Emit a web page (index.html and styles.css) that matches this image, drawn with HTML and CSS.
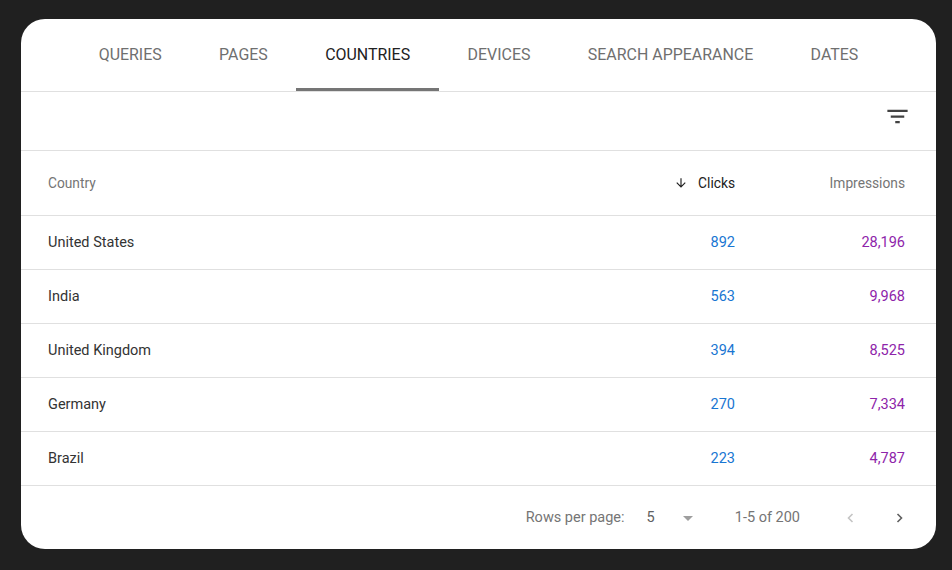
FILE: index.html
```html
<!DOCTYPE html>
<html>
<head>
<meta charset="utf-8">
<link rel="stylesheet" href="styles.css">
</head>
<body>
<div class="card">
  <nav class="tabs">
    <div class="tab">Queries</div>
    <div class="tab">Pages</div>
    <div class="tab active">Countries</div>
    <div class="tab">Devices</div>
    <div class="tab">Search appearance</div>
    <div class="tab">Dates</div>
  </nav>
  <div class="toolbar">
    <svg class="filter" viewBox="0 0 24 24" width="27" height="27"><path d="M10 18h4v-2h-4v2zM3 6v2h18V6H3zm3 7h12v-2H6v2z" fill="#424242"/></svg>
  </div>
  <div class="row head">
    <div class="c-name">Country</div>
    <div class="c-clicks sorted">
      <svg viewBox="0 0 24 24" width="14" height="14"><path d="M20 12l-1.41-1.41L13 16.17V4h-2v12.17l-5.58-5.59L4 12l8 8 8-8z" fill="#212121"/></svg>
      <span>Clicks</span>
    </div>
    <div class="c-impr">Impressions</div>
  </div>
  <div class="row"><div class="c-name">United States</div><div class="c-clicks">892</div><div class="c-impr">28,196</div></div>
  <div class="row"><div class="c-name">India</div><div class="c-clicks">563</div><div class="c-impr">9,968</div></div>
  <div class="row"><div class="c-name">United Kingdom</div><div class="c-clicks">394</div><div class="c-impr">8,525</div></div>
  <div class="row"><div class="c-name">Germany</div><div class="c-clicks">270</div><div class="c-impr">7,334</div></div>
  <div class="row last"><div class="c-name">Brazil</div><div class="c-clicks">223</div><div class="c-impr">4,787</div></div>
  <div class="footer">
    <span class="rpp">Rows per page:</span>
    <span class="sel">5</span>
    <svg class="drop" viewBox="0 0 24 24" width="24" height="24"><path d="M7 10l5 5 5-5z" fill="#9e9e9e"/></svg>
    <span class="range">1-5 of 200</span>
    <svg class="nav prev" viewBox="0 0 24 24" width="24" height="24"><polyline points="14.5,8 10.5,12 14.5,16" fill="none" stroke="#c4c4c4" stroke-width="1.6"/></svg>
    <svg class="nav next" viewBox="0 0 24 24" width="24" height="24"><polyline points="10.5,8 14.5,12 10.5,16" fill="none" stroke="#5f5f5f" stroke-width="1.6"/></svg>
  </div>
</div>
</body>
</html>
```
FILE: styles.css
```css
html, body {
  margin: 0;
  padding: 0;
  background: #202020;
}
body {
  padding: 19px 0 0 21px;
  font-family: Roboto, "Liberation Sans", sans-serif;
}
.card {
  width: 915px;
  height: 530px;
  background: #fff;
  border-radius: 24px;
  overflow: hidden;
  display: flex;
  flex-direction: column;
}
.tabs {
  display: flex;
  justify-content: center;
  height: 72px;
  border-bottom: 1px solid #e0e0e0;
  flex-shrink: 0;
}
.tab {
  padding: 1px 28.7px 0;
  display: flex;
  align-items: center;
  text-transform: uppercase;
  font-size: 15.95px;
  color: #6f6f6f;
  border-bottom: 3px solid transparent;
  box-sizing: border-box;
}
.tab.active {
  color: #212121;
  border-bottom-color: #757575;
}
.toolbar {
  height: 59px;
  flex-shrink: 0;
  border-bottom: 1px solid #e0e0e0;
  display: flex;
  justify-content: flex-end;
  align-items: flex-start;
  padding: 11px 25px 0 0;
  box-sizing: border-box;
}
.row {
  display: grid;
  grid-template-columns: 1fr 200px 170px;
  align-items: center;
  height: 54px;
  flex-shrink: 0;
  padding: 0 31px 1px 27px;
  border-bottom: 1px solid #e0e0e0;
  box-sizing: border-box;
  font-size: 14.5px;
  color: #333;
}
.row.head {
  height: 65px;
  padding-bottom: 0;
  font-size: 13.75px;
  color: #757575;
}
.c-clicks, .c-impr {
  text-align: right;
}
.c-clicks { color: #1976d2; }
.c-impr { color: #8e24aa; }
.head .c-clicks, .head .c-impr { color: #757575; }
.head .c-clicks.sorted {
  color: #212121;
  display: flex;
  justify-content: flex-end;
  align-items: center;
  gap: 10px;
}
.footer {
  flex: 1;
  display: flex;
  align-items: center;
  justify-content: flex-end;
  padding-right: 25px;
  font-size: 14.5px;
  color: #757575;
}
.sel {
  margin-left: 22px;
  color: #616161;
}
.drop {
  margin-left: 21px;
}
.range {
  margin-left: 35px;
}
.prev {
  margin-left: 38px;
}
.next {
  margin-left: 25px;
}
```
